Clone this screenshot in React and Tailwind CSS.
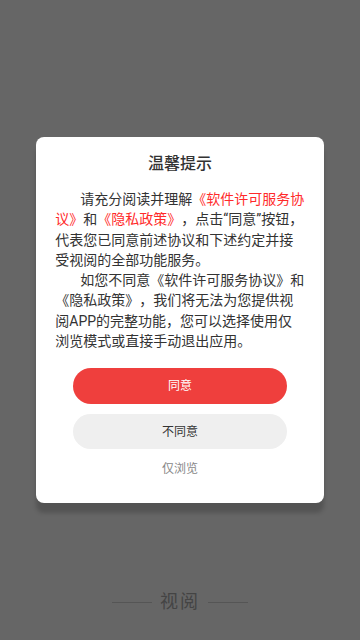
import React from 'react';

const font = { fontFamily: 'Roboto, "Noto Sans CJK SC", sans-serif' };

const PrivacyDialog = () => {
  return (
    <div className="w-[288px] h-[366px] bg-white rounded-[8px] shadow-[0_10px_4px_rgba(0,0,0,0.18)] pt-[16px] flex flex-col items-center">
      <h2 className="text-center text-[16px] leading-[22px] font-medium text-[#333]">温馨提示</h2>

      <div className="mt-[14px] w-[249.5px] text-[14px] leading-[20.3px] text-[#333] [text-spacing-trim:space-all]">
        <p className="indent-[25px]">
          请充分阅读并理解
          <span className="text-[#ff2a2a]">《软件许可服务协议》</span>和
          <span className="text-[#ff2a2a]">《隐私政策》</span>，点击“同意”按钮，代表您已同意前述协议和下述约定并接受视阅的全部功能服务。
        </p>
        <p className="indent-[25px]">
          如您不同意《软件许可服务协议》和《隐私政策》，我们将无法为您提供视阅APP的完整功能，您可以选择使用仅浏览模式或直接手动退出应用。
        </p>
      </div>

      <div className="mt-[17px] flex flex-col items-center">
        <button
          type="button"
          className="w-[214px] h-[36px] rounded-full bg-[#ef3f3d] text-white text-[12px]"
        >
          同意
        </button>
        <button
          type="button"
          className="mt-[10px] w-[214px] h-[35px] rounded-full bg-[#efefef] text-[#333] text-[12px]"
        >
          不同意
        </button>
        <button type="button" className="mt-[12px] text-[12px] leading-[16px] text-[#888]">
          仅浏览
        </button>
      </div>
    </div>
  );
};

export default function App() {
  return (
    <div className="relative w-full h-[640px] bg-[#666666] overflow-hidden" style={font}>
      {/* splash underneath */}
      <div className="h-full flex flex-col justify-end items-center pb-[26px]">
        <div className="flex items-center gap-[8px]">
          <span className="w-[40px] h-px bg-[#555]" />
          <span className="text-[18px] leading-[24px] text-[#444] tracking-[2px]">视阅</span>
          <span className="w-[40px] h-px bg-[#555]" />
        </div>
      </div>

      {/* dialog */}
      <div className="absolute inset-0 flex items-center justify-center">
        <PrivacyDialog />
      </div>
    </div>
  );
}
